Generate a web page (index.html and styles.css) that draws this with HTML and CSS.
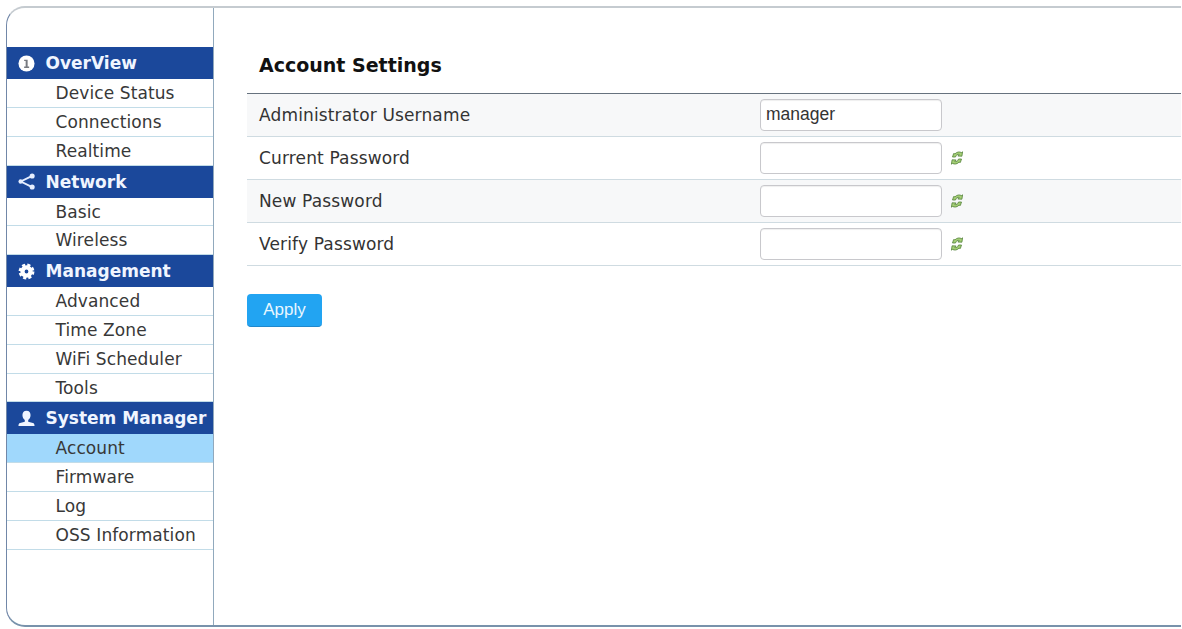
FILE: index.html
```
<!DOCTYPE html>
<html lang="en">
<head>
  <meta charset="UTF-8" />
  <meta name="viewport" content="width=device-width, initial-scale=1" />
  <title>Account Settings</title>
  <link rel="stylesheet" href="styles.css">
</head>
<body>
  <svg class="defs" width="0" height="0">
    <symbol id="refresh" viewBox="0 0 12 14">
      <path d="M1.500 6 2.600 2.600 4 2.800C6 .6 8.800.6 10.400 1.600L11.600.8 10.900 5.200 6.800 5 8.200 3.600C6.800 2.900 5.200 3.600 4.500 6Z" />
      <path d="M10.500 8 9.400 11.400 8 11.200C6 13.400 3.200 13.400 1.600 12.400L.4 13.200 1.100 8.800 5.200 9 3.800 10.400C5.200 11.100 6.800 10.400 7.500 8Z" />
    </symbol>
  </svg>

  <div class="panel">
    <nav class="sidebar">
      <h2>
        <svg class="icon" viewBox="0 0 18 18"><circle cx="9" cy="9" r="8.500" fill="#fff" /><path d="M6.500 5h3.700v7.200h1.600v1.500H6.500v-1.500h1.600V6.400H6.500z" fill="#777a80" /></svg>
        <span>OverView</span>
      </h2>
      <ul>
        <li><a href="#">Device Status</a></li>
        <li><a href="#">Connections</a></li>
        <li><a href="#">Realtime</a></li>
      </ul>
      <h2>
        <svg class="icon" viewBox="0 0 18 18"><path d="M15 3 3 9l12 6" fill="none" stroke="#e6eeff" stroke-width="2" /><circle cx="15" cy="3.200" r="2.700" fill="#e6eeff" /><circle cx="2.800" cy="9" r="2.300" fill="#e6eeff" /><circle cx="15" cy="14.800" r="2.700" fill="#e6eeff" /></svg>
        <span>Network</span>
      </h2>
      <ul>
        <li><a href="#">Basic</a></li>
        <li><a href="#">Wireless</a></li>
      </ul>
      <h2>
        <svg class="icon" viewBox="0 0 18 18"><circle cx="9" cy="9" r="4.300" fill="none" stroke="#fff" stroke-width="4.600" /><circle cx="9" cy="9" r="6.900" fill="none" stroke="#fff" stroke-width="3" stroke-dasharray="3.200 2.219" /></svg>
        <span>Management</span>
      </h2>
      <ul>
        <li><a href="#">Advanced</a></li>
        <li><a href="#">Time Zone</a></li>
        <li><a href="#">WiFi Scheduler</a></li>
        <li><a href="#">Tools</a></li>
      </ul>
      <h2>
        <svg class="icon" viewBox="0 0 18 18"><path d="M9 .7c3 0 4.300 2 4.300 4.600 0 2.400-1 4.200-2.500 5.300v1.800l5 1.400c1.200.4 1.700 1.200 1.700 3.200H.5c0-2 .5-2.800 1.700-3.200l5-1.400v-1.800C5.700 9.500 4.700 7.700 4.700 5.300 4.700 2.700 6 .7 9 .7z" fill="#f0f5ff" /></svg>
        <span>System Manager</span>
      </h2>
      <ul>
        <li class="active"><a href="#">Account</a></li>
        <li><a href="#">Firmware</a></li>
        <li><a href="#">Log</a></li>
        <li><a href="#">OSS Information</a></li>
      </ul>
    </nav>

    <main>
      <h1>Account Settings</h1>
      <form>
        <div class="rows">
          <div class="row">
            <label for="username">Administrator Username</label>
            <input type="text" id="username" value="manager" />
          </div>
          <div class="row">
            <label for="current">Current Password</label>
            <input type="password" id="current" />
            <svg class="refresh"><use href="#refresh" /></svg>
          </div>
          <div class="row">
            <label for="new">New Password</label>
            <input type="password" id="new" />
            <svg class="refresh"><use href="#refresh" /></svg>
          </div>
          <div class="row">
            <label for="verify">Verify Password</label>
            <input type="password" id="verify" />
            <svg class="refresh"><use href="#refresh" /></svg>
          </div>
        </div>
        <button type="button">Apply</button>
      </form>
    </main>
  </div>
</body>
</html>
```
FILE: styles.css
```
* {
  box-sizing: border-box;
}
body {
  margin: 0; padding: 6px 1px 0 6px; height: 629px; overflow: hidden;
  background: #fff; color: #333;
  font-family: "DejaVu Sans", Verdana, sans-serif;
}
.defs {
  position: absolute;
}
.panel {
  display: flex; height: 621px;
  border: 1.5px solid #7187a8; border-top: 2px solid #c5cbd0;
  border-bottom: 2px solid #7892ab; border-right: none;
  border-radius: 19px 0 0 19px;
}
.sidebar {
  width: 207px; padding-top: 39.2px;
  border-right: 1px solid #91a9bd;
}
.sidebar h2 {
  display: flex; align-items: center;
  height: 32px; margin: 0; padding-left: 11px;
  background: #1b489b; color: #f0f5ff;
  font-size: 17px; font-weight: bold; white-space: nowrap;
}
.icon {
  width: 17px; height: 17px; margin-right: 10.5px; flex: none;
}
.sidebar ul {
  list-style: none; margin: 0; padding: 0;
}
.sidebar li {
  height: 28.8px; padding-left: 48.5px;
  border-bottom: 1px solid #c2dce8;
  line-height: 28.5px; font-size: 17px; white-space: nowrap;
  letter-spacing: 0.1px;
}
.sidebar li a {
  color: #383838; text-decoration: none;
}
.sidebar li.active {
  background: #a0d8fc;
}
main {
  flex: 1; padding-left: 33px;
}
h1 {
  height: 85px; margin: 0; padding-left: 12px;
  font-size: 19px; line-height: 115px; color: #111;
}
.rows {
  border-top: 1px solid #66727e;
}
.row {
  display: flex; align-items: center;
  height: 42.9px; padding-left: 12px;
  border-bottom: 1px solid #cfdbe1;
}
.row:nth-child(odd) {
  background: #f7f8f9;
}
.row label {
  width: 501px; padding-top: 1px; font-size: 17px; letter-spacing: 0.15px;
}
.row input {
  width: 182px; height: 32px; padding: 0 5px;
  border: 1px solid #c8c8cc; border-radius: 4px;
  background: #fff; color: #333;
  font: 17.5px "Liberation Sans", Arial, sans-serif;
  box-shadow: inset 0 1px 1px #0001;
}
.refresh {
  width: 12px; height: 14px; margin-left: 9px;
  fill: #a5cf75; stroke: #52803a; stroke-width: 0.8;
}
button {
  display: block; width: 75px; height: 33px; margin-top: 28px; padding: 0;
  border: none; border-bottom: 1px solid #2088cc; border-radius: 4px;
  background: #22a4f2; color: #e9f7ff;
  font: 17px "Liberation Sans", Arial, sans-serif;
}
```
